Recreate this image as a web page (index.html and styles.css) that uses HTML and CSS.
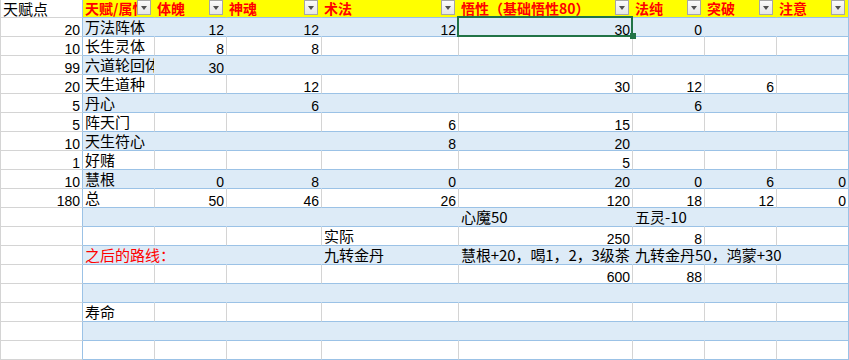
FILE: index.html
```html
<!DOCTYPE html>
<html lang="zh-CN">
<head>
<meta charset="utf-8">
<title>天赋点</title>
<link rel="stylesheet" href="styles.css">
</head>
<body>
<div class="sheet">
  <div class="row head">
    <div class="c a t">天赋点</div>
    <div class="c h"><span class="lbl">天赋/属性</span><span class="dd"></span></div>
    <div class="c h"><span class="lbl">体魄</span><span class="dd"></span></div>
    <div class="c h"><span class="lbl">神魂</span><span class="dd"></span></div>
    <div class="c h"><span class="lbl">术法</span><span class="dd"></span></div>
    <div class="c h"><span class="lbl">悟性（基础悟性80）</span><span class="dd"></span></div>
    <div class="c h"><span class="lbl">法纯</span><span class="dd"></span></div>
    <div class="c h"><span class="lbl">突破</span><span class="dd"></span></div>
    <div class="c h"><span class="lbl">注意</span><span class="dd"></span></div>
  </div>
  <div class="row band">
    <div class="c a n">20</div>
    <div class="c t">万法阵体</div>
    <div class="c n">12</div>
    <div class="c n">12</div>
    <div class="c n">12</div>
    <div class="c n sel">30<span class="sel-box"></span><span class="handle"></span></div>
    <div class="c n">0</div>
    <div class="c"></div>
    <div class="c"></div>
  </div>
  <div class="row">
    <div class="c a n">10</div>
    <div class="c t">长生灵体</div>
    <div class="c n">8</div>
    <div class="c n">8</div>
    <div class="c"></div>
    <div class="c"></div>
    <div class="c"></div>
    <div class="c"></div>
    <div class="c"></div>
  </div>
  <div class="row band">
    <div class="c a n">99</div>
    <div class="c t clip">六道轮回体</div>
    <div class="c n">30</div>
    <div class="c"></div>
    <div class="c"></div>
    <div class="c"></div>
    <div class="c"></div>
    <div class="c"></div>
    <div class="c"></div>
  </div>
  <div class="row">
    <div class="c a n">20</div>
    <div class="c t">天生道种</div>
    <div class="c"></div>
    <div class="c n">12</div>
    <div class="c"></div>
    <div class="c n">30</div>
    <div class="c n">12</div>
    <div class="c n">6</div>
    <div class="c"></div>
  </div>
  <div class="row band">
    <div class="c a n">5</div>
    <div class="c t">丹心</div>
    <div class="c"></div>
    <div class="c n">6</div>
    <div class="c"></div>
    <div class="c"></div>
    <div class="c n">6</div>
    <div class="c"></div>
    <div class="c"></div>
  </div>
  <div class="row">
    <div class="c a n">5</div>
    <div class="c t">阵天门</div>
    <div class="c"></div>
    <div class="c"></div>
    <div class="c n">6</div>
    <div class="c n">15</div>
    <div class="c"></div>
    <div class="c"></div>
    <div class="c"></div>
  </div>
  <div class="row band">
    <div class="c a n">10</div>
    <div class="c t">天生符心</div>
    <div class="c"></div>
    <div class="c"></div>
    <div class="c n">8</div>
    <div class="c n">20</div>
    <div class="c"></div>
    <div class="c"></div>
    <div class="c"></div>
  </div>
  <div class="row">
    <div class="c a n">1</div>
    <div class="c t">好赌</div>
    <div class="c"></div>
    <div class="c"></div>
    <div class="c"></div>
    <div class="c n">5</div>
    <div class="c"></div>
    <div class="c"></div>
    <div class="c"></div>
  </div>
  <div class="row band">
    <div class="c a n">10</div>
    <div class="c t">慧根</div>
    <div class="c n">0</div>
    <div class="c n">8</div>
    <div class="c n">0</div>
    <div class="c n">20</div>
    <div class="c n">0</div>
    <div class="c n">6</div>
    <div class="c n">0</div>
  </div>
  <div class="row">
    <div class="c a n">180</div>
    <div class="c t">总</div>
    <div class="c n">50</div>
    <div class="c n">46</div>
    <div class="c n">26</div>
    <div class="c n">120</div>
    <div class="c n">18</div>
    <div class="c n">12</div>
    <div class="c n">0</div>
  </div>
  <div class="row band">
    <div class="c a"></div>
    <div class="c"></div>
    <div class="c"></div>
    <div class="c"></div>
    <div class="c"></div>
    <div class="c t">心魔50</div>
    <div class="c t">五灵-10</div>
    <div class="c"></div>
    <div class="c"></div>
  </div>
  <div class="row">
    <div class="c a"></div>
    <div class="c"></div>
    <div class="c"></div>
    <div class="c"></div>
    <div class="c t">实际</div>
    <div class="c n">250</div>
    <div class="c n">8</div>
    <div class="c"></div>
    <div class="c"></div>
  </div>
  <div class="row band">
    <div class="c a"></div>
    <div class="c t red">之后的路线：</div>
    <div class="c"></div>
    <div class="c"></div>
    <div class="c t">九转金丹</div>
    <div class="c t tight">慧根+20，喝1，2，3级茶</div>
    <div class="c t">九转金丹50，鸿蒙+30</div>
    <div class="c"></div>
    <div class="c"></div>
  </div>
  <div class="row">
    <div class="c a"></div>
    <div class="c"></div>
    <div class="c"></div>
    <div class="c"></div>
    <div class="c"></div>
    <div class="c n">600</div>
    <div class="c n">88</div>
    <div class="c"></div>
    <div class="c"></div>
  </div>
  <div class="row band">
    <div class="c a"></div>
    <div class="c"></div>
    <div class="c"></div>
    <div class="c"></div>
    <div class="c"></div>
    <div class="c"></div>
    <div class="c"></div>
    <div class="c"></div>
    <div class="c"></div>
  </div>
  <div class="row">
    <div class="c a"></div>
    <div class="c t">寿命</div>
    <div class="c"></div>
    <div class="c"></div>
    <div class="c"></div>
    <div class="c"></div>
    <div class="c"></div>
    <div class="c"></div>
    <div class="c"></div>
  </div>
  <div class="row band">
    <div class="c a"></div>
    <div class="c"></div>
    <div class="c"></div>
    <div class="c"></div>
    <div class="c"></div>
    <div class="c"></div>
    <div class="c"></div>
    <div class="c"></div>
    <div class="c"></div>
  </div>
  <div class="row">
    <div class="c a"></div>
    <div class="c"></div>
    <div class="c"></div>
    <div class="c"></div>
    <div class="c"></div>
    <div class="c"></div>
    <div class="c"></div>
    <div class="c"></div>
    <div class="c"></div>
  </div>
</div>
</body>
</html>
```

FILE: styles.css
```css
* { box-sizing: border-box; }
html, body { margin: 0; padding: 0; background: #fff; }
body {
  width: 849px;
  height: 360px;
  overflow: hidden;
  font-family: "Liberation Sans", "Noto Sans CJK SC", sans-serif;
  color: #000;
}
.sheet { display: flex; flex-direction: column; width: 849px; }
.row {
  display: grid;
  grid-template-columns: 83px 72px 72px 95px 137px 174px 72px 72px 72px;
  grid-template-rows: 19px;
}
.row.head { grid-template-rows: 18px; background: #ffff00; }
.row.band { background: #ddebf7; }

.c {
  display: flex;
  align-items: flex-end;
  min-width: 0;
  padding: 0 2px;
  white-space: nowrap;
  border-right: 1px solid #d4d4d4;
  border-bottom: 1px solid #9bc2e6;
  font-size: 14px;
  line-height: 12px;
}
.band .c, .head .c { border-right-color: transparent; }
.row .c:last-child { border-right-color: #9bc2e6; }
.row .c.a {
  background: #fff;
  border-left: 1px solid #d4d4d4;
  border-right-color: #9bc2e6;
  border-bottom-color: #d4d4d4;
}
.n { justify-content: flex-end; }
.t {
  font-family: "Noto Sans CJK SC", sans-serif;
  font-size: 15px;
  line-height: 18px;
}
.head .t { line-height: 17px; }
.tight { letter-spacing: -0.1px; }
.clip { overflow: hidden; }
.red { color: #ff0000; }

.h {
  font-family: "Noto Sans CJK SC", sans-serif;
  font-size: 14px;
  line-height: 17px;
  font-weight: 700;
  color: #ff0000;
  padding-right: 3px;
}
.lbl { flex: 1 1 auto; min-width: 0; overflow: hidden; }
.dd {
  flex: none;
  align-self: flex-start;
  width: 14px;
  height: 15px;
  border: 1px solid #a6a6a6;
  background: linear-gradient(#fbfbfb, #e4e4e4);
  display: flex;
  align-items: center;
  justify-content: center;
}
.dd::after {
  content: "";
  width: 0;
  height: 0;
  border-left: 3.5px solid transparent;
  border-right: 3.5px solid transparent;
  border-top: 4px solid #505050;
}

.sel { position: relative; }
.sel-box {
  position: absolute;
  left: -2px;
  top: -2px;
  right: -1px;
  bottom: -1px;
  border: 2px solid #217346;
  z-index: 2;
}
.handle {
  position: absolute;
  right: -4px;
  bottom: -3px;
  width: 6px;
  height: 6px;
  background: #217346;
  z-index: 3;
}
```
